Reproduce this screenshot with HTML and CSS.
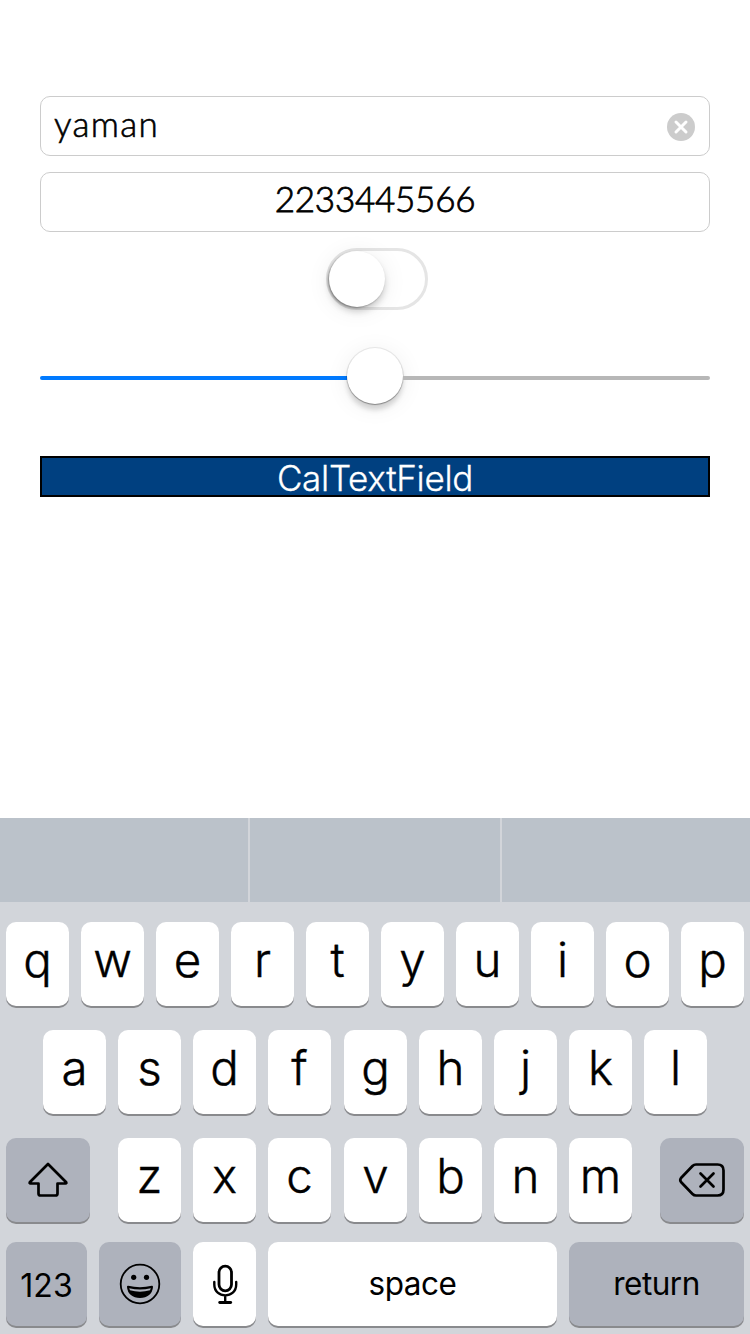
FILE: index.html
```html
<!DOCTYPE html>
<html lang="en">
<head>
<meta charset="utf-8">
<title>CalTextField</title>
<link rel="stylesheet" href="styles.css">
</head>
<body>
<main class="form">
  <div class="field">
    <span class="field-text">yaman</span>
    <svg class="clear" width="28" height="28" viewBox="0 0 28 28"><circle cx="14" cy="14" r="14" fill="#ccc"/><path d="M9 9l10 10M19 9L9 19" stroke="#fff" stroke-width="3" stroke-linecap="round"/></svg>
  </div>
  <div class="field field-center"><span class="field-text field-number">2233445566</span></div>
  <div class="switch"><div class="knob"></div></div>
  <div class="slider">
    <div class="track track-on"></div>
    <div class="thumb"></div>
    <div class="track"></div>
  </div>
  <div class="label">CalTextField</div>
</main>
<section class="keyboard">
  <div class="suggestions"><div class="suggestion"></div><div class="suggestion middle"></div><div class="suggestion"></div></div>
  <div class="keys">
    <div class="row">
      <div class="key">q</div><div class="key">w</div><div class="key">e</div><div class="key">r</div><div class="key">t</div><div class="key">y</div><div class="key">u</div><div class="key">i</div><div class="key">o</div><div class="key">p</div>
    </div>
    <div class="row row-home">
      <div class="key">a</div><div class="key">s</div><div class="key">d</div><div class="key">f</div><div class="key half">g</div><div class="key">h</div><div class="key">j</div><div class="key">k</div><div class="key">l</div>
    </div>
    <div class="row">
      <div class="key dark shift"><svg width="84" height="84" viewBox="0 0 84 84"><path d="M42 26L60.2 44.2Q60.8 45.5 59.5 45.5H51.5V55.5Q51.5 57.5 49.5 57.5H34.5Q32.5 57.5 32.5 55.5V45.5H24.5Q23.2 45.5 23.8 44.2Z" fill="none" stroke="#000" stroke-width="2.7" stroke-linejoin="round"/></svg></div>
      <div class="key">z</div><div class="key">x</div><div class="key">c</div><div class="key half">v</div><div class="key">b</div><div class="key">n</div><div class="key">m</div>
      <div class="key dark delete"><svg width="84" height="84" viewBox="0 0 84 84"><path d="M36 26.5H57.5Q63.5 26.5 63.5 32.5V51.5Q63.5 57.5 57.5 57.5H36Q34 57.5 32.5 56L21 44Q19.5 42 21 40L32.5 28Q34 26.5 36 26.5Z" fill="none" stroke="#000" stroke-width="2.7" stroke-linejoin="round"/><path d="M40.5 35.5L53.5 48.5M53.5 35.5L40.5 48.5" stroke="#000" stroke-width="2.7" stroke-linecap="round"/></svg></div>
    </div>
    <div class="row row-last">
      <div class="key dark word numbers">123</div>
      <div class="key dark emoji"><svg width="82" height="84" viewBox="0 0 82 84"><circle cx="41" cy="42" r="19.3" fill="none" stroke="#000" stroke-width="1.8"/><circle cx="34.7" cy="35.3" r="2.6"/><circle cx="47.5" cy="35.3" r="2.6"/><path d="M29 44.8Q41 47.8 53 44.8C52.5 51 48 55 41 55S29.5 51 29 44.8Z" stroke="#000" stroke-width="2" stroke-linejoin="round"/><path d="M30.2 46.2Q41 49 51.8 46.2L51 48.3Q41 51 31 48.3Z" fill="#aeb2bc"/></svg></div>
      <div class="key"><svg width="63" height="84" viewBox="0 0 63 84"><rect x="26" y="24.2" width="12.5" height="24.6" rx="6.25" fill="none" stroke="#000" stroke-width="2.8"/><path d="M21.3 40V42.5C21.3 57 43.2 57 43.2 42.5V40M32.2 54V60" fill="none" stroke="#000" stroke-width="2.4" stroke-linecap="round"/><path d="M26.7 60.5H37.7" stroke="#000" stroke-width="2.8" stroke-linecap="round"/></svg></div>
      <div class="key word space">space</div>
      <div class="key dark word return">return</div>
    </div>
  </div>
</section>
</body>
</html>
```
FILE: styles.css
```css
* { box-sizing: border-box; }
body { margin: 0; width: 750px; height: 1334px; display: flex; flex-direction: column; background: #fff; color: #000; font-family: Inter, "Liberation Sans", sans-serif; overflow: hidden; }
svg { display: block; }
.form { height: 818px; padding: 96px 40px 0; display: flex; flex-direction: column; }
.field { height: 60px; margin-bottom: 16px; padding: 0 14px 0 13px; border: 1px solid #ccc; border-radius: 10px; display: flex; justify-content: space-between; font: 300 35px/52px Lato, sans-serif; }
.field-center { justify-content: center; padding: 0; line-height: 50px; }
.field-text { letter-spacing: 1.3px; -webkit-text-stroke: 0.6px #000; }
.field-number { letter-spacing: -0.25px; -webkit-text-stroke: 0.8px #000; }
.clear { margin-top: 16px; }
.switch { width: 102px; height: 62px; margin-left: 286px; border: 3px solid #e5e5e5; border-radius: 31px; }
.knob { width: 56px; height: 56px; border-radius: 50%; background: #fff; box-shadow: -1px 1px 2px rgba(0,0,0,.35), 0 5px 6px rgba(0,0,0,.16), 0 3px 24px rgba(0,0,0,.08); }
.slider { height: 62px; margin-top: 37px; display: flex; align-items: center; }
.track { flex: 1; height: 4px; border-radius: 0 2px 2px 0; background: #b7b7b7; }
.track-on { background: #007aff; border-radius: 2px 0 0 2px; }
.thumb { width: 56px; height: 56px; margin: -4px 0 0; border-radius: 50%; background: #fff; box-shadow: 0 0 0 1px rgba(0,0,0,.08), 0 1px 1px rgba(0,0,0,.3), 0 6px 5px rgba(0,0,0,.15), 0 3px 24px rgba(0,0,0,.07); }
.label { height: 41px; margin-top: 47px; border: 2px solid #000; background: #004080; color: #fff; text-align: center; font-size: 35px; font-weight: 350; line-height: 41px; letter-spacing: -0.3px; -webkit-text-stroke: 0.3px #fff; }
.keyboard { height: 516px; background: #d2d5da; }
.suggestions { height: 84px; display: flex; gap: 2px; }
.suggestion { width: 248px; background: #bbc2ca; }
.middle { width: 250px; }
.keys { padding: 20px 6px 0; display: flex; flex-direction: column; gap: 24px; }
.row { display: flex; gap: 12px; }
.row-home { padding-left: 37px; }
.row-last { margin-top: -4px; }
.key { flex: none; width: 63px; height: 84px; border-radius: 10px; background: #fff; box-shadow: 0 2px 0 #898a8d; text-align: center; font-size: 47.5px; font-weight: 350; line-height: 75px; -webkit-text-stroke: 0.4px #000; }
.half { margin-left: 1px; }
.dark { background: #aeb2bc; }
.shift { width: 84px; margin-right: 16px; }
.delete { width: 84px; margin-left: 16px; }
.word { font-size: 31.5px; font-weight: 400; line-height: 83px; letter-spacing: -0.5px; -webkit-text-stroke: 0; }
.numbers { width: 81px; line-height: 87px; font-size: 32px; letter-spacing: 0; }
.emoji { width: 82px; }
.space { width: 289px; }
.return { width: 175px; }
```
